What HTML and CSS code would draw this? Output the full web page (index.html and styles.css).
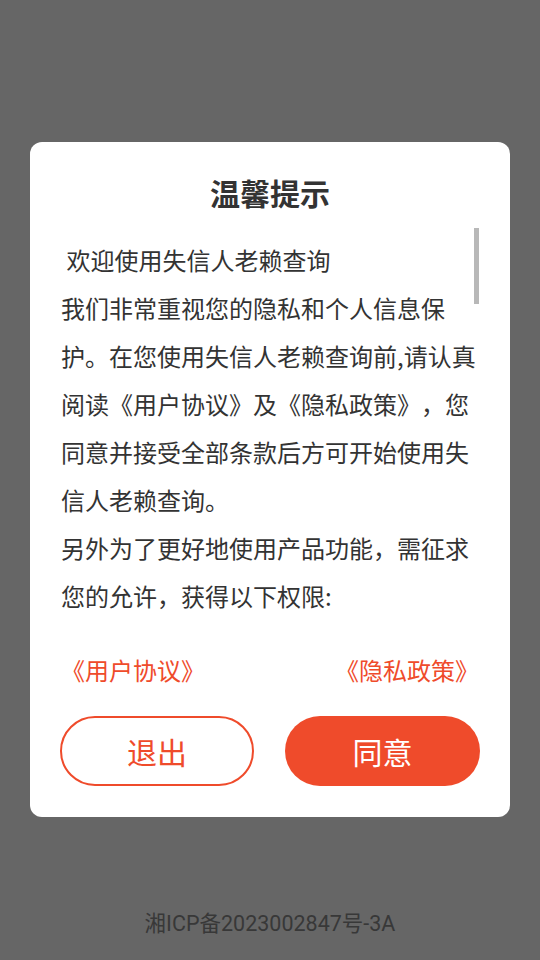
FILE: index.html
```html
<!DOCTYPE html>
<html lang="zh-CN">
<head>
    <meta charset="UTF-8">
    <meta name="viewport" content="width=device-width, initial-scale=1.0">
    <title>温馨提示</title>
    <link rel="stylesheet" href="styles.css">
</head>
<body>
    <div class="page">
        <div class="dialog">
            <h2 class="dialog-title">温馨提示</h2>
            <div class="dialog-content">
                <div class="content-text">
                    <p class="welcome">&nbsp;欢迎使用失信人老赖查询</p>
                    <p>我们非常重视您的隐私和个人信息保护。在您使用失信人老赖查询前,请认真阅读《用户协议》及《隐私政策》，您同意并接受全部条款后方可开始使用失信人老赖查询。</p>
                    <p>另外为了更好地使用产品功能，需征求您的允许，获得以下权限:</p>
                </div>
                <div class="scroll-thumb"></div>
            </div>
            <div class="links">
                <a href="#" class="link">《用户协议》</a>
                <a href="#" class="link">《隐私政策》</a>
            </div>
            <div class="actions">
                <button class="btn btn-exit">退出</button>
                <button class="btn btn-agree">同意</button>
            </div>
        </div>
        <div class="footer">湘ICP备2023002847号-3A</div>
    </div>
</body>
</html>
```

FILE: styles.css
```css
body {
    margin: 0;
    font-family: "Noto Sans CJK SC", "Noto Sans", sans-serif;
    background: #666666;
    color: #333333;
    text-spacing-trim: space-all;
}

.page {
    height: 960px;
    box-sizing: border-box;
    padding-top: 142px;
    display: flex;
    flex-direction: column;
}

.dialog {
    width: 480px;
    box-sizing: border-box;
    margin: 0 auto;
    background: #ffffff;
    border-radius: 12px;
    padding: 30px 30px 31px;
}

.dialog-title {
    margin: 0;
    font-size: 30px;
    line-height: 40px;
    font-weight: bold;
    text-align: center;
    color: #333333;
}

.dialog-content {
    position: relative;
    margin-top: 16px;
    height: 392px;
    overflow: hidden;
}

.content-text {
    padding: 8px 0 0 1px;
    font-size: 24px;
    line-height: 48px;
    line-break: strict;
}

.content-text p {
    margin: 0;
}

.scroll-thumb {
    position: absolute;
    top: 0;
    right: 1px;
    width: 5px;
    height: 76px;
    background: #b8b8b8;
}

.links {
    display: flex;
    justify-content: space-between;
    margin-top: 34px;
    padding: 0 1px;
    font-size: 24px;
    line-height: 32px;
}

.link {
    color: #ef4b2b;
    text-decoration: none;
}

.actions {
    display: flex;
    justify-content: space-between;
    margin-top: 30px;
}

.btn {
    height: 70px;
    border-radius: 35px;
    font-family: inherit;
    font-size: 30px;
    cursor: pointer;
    box-sizing: border-box;
    padding: 0;
}

.btn-exit {
    width: 194px;
    background: #ffffff;
    border: 2px solid #ef4b2b;
    color: #ef4b2b;
}

.btn-agree {
    width: 195px;
    background: #ef4b2b;
    border: none;
    color: #ffffff;
}

.footer {
    margin-top: auto;
    padding-bottom: 22px;
    text-align: center;
    font-family: Roboto, "Noto Sans CJK SC", sans-serif;
    font-size: 21.5px;
    line-height: 28px;
    color: #383838;
}
```
